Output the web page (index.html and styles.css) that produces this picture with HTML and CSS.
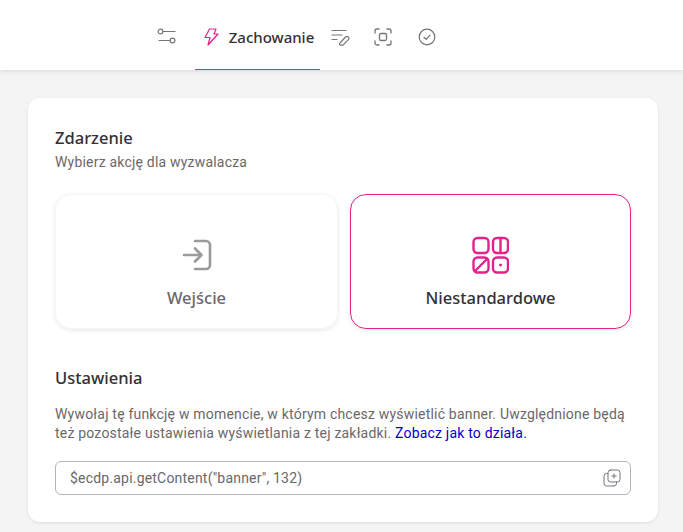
FILE: index.html
```html
<!DOCTYPE html>
<html>
<head>
<meta charset="utf-8">
<title>Zachowanie</title>
<link rel="stylesheet" href="styles.css">
</head>
<body>

<div class="topbar">
    <div class="tab">
        <svg width="20" height="20" viewBox="0 0 20 20" fill="none" stroke="#77737a" stroke-width="1.2" stroke-linecap="round">
            <circle cx="3.500" cy="4.500" r="2.400"/>
            <path d="M6 4.500h12"/>
            <circle cx="15.500" cy="13.500" r="2.400"/>
            <path d="M2 13.500h11"/>
        </svg>
    </div>
    <div class="tab active">
        <svg width="15" height="18" viewBox="0 0 15 18" fill="none" stroke="#e5218b" stroke-width="1.200" stroke-linejoin="round">
            <path d="M5.500 1h6.500l-2 5h4L4 17l2-7.500H1z"/>
        </svg>
        <span>Zachowanie</span>
    </div>
    <div class="tab">
        <svg width="20" height="20" viewBox="0 0 20 20" fill="none" stroke="#77737a" stroke-width="1.200" stroke-linecap="round" stroke-linejoin="round">
            <path d="M2 3.500h14M2 8h10M2 12.500h5"/>
            <path d="M10 16l5.500-6a2 2 0 0 1 3 2.600l-5.500 5.600h-2.200a1.200 1.200 0 0 1-.8-2.200z"/>
        </svg>
    </div>
    <div class="tab">
        <svg width="18" height="18" viewBox="0 0 18 18" fill="none" stroke="#77737a" stroke-width="1.300" stroke-linecap="round">
            <path d="M1 5V3a2 2 0 0 1 2-2h2M13 1h2a2 2 0 0 1 2 2v2M17 13v2a2 2 0 0 1-2 2h-2M5 17H3a2 2 0 0 1-2-2v-2"/>
            <rect x="5.500" y="5.500" width="7" height="7" rx="1.500"/>
        </svg>
    </div>
    <div class="tab">
        <svg width="18" height="18" viewBox="0 0 18 18" fill="none" stroke="#77737a" stroke-width="1.200" stroke-linecap="round" stroke-linejoin="round">
            <circle cx="9" cy="9" r="7.800"/>
            <path d="M6 9.300l2.200 2 3.800-4.200"/>
        </svg>
    </div>
</div>

<div class="content">
    <div class="card">
        <h2>Zdarzenie</h2>
        <p class="sub">Wybierz akcję dla wyzwalacza</p>

        <div class="tiles">
            <div class="tile">
                <svg width="32" height="32" viewBox="0 0 32 32" fill="none" stroke="#9b9a9b" stroke-width="2.600" stroke-linecap="round" stroke-linejoin="round">
                    <path d="M14 2h11a4 4 0 0 1 4 4v20a4 4 0 0 1-4 4H14"/>
                    <path d="M3 16h17M14 9.500l6.500 6.500-6.500 6.500"/>
                </svg>
                <span>Wejście</span>
            </div>
            <div class="tile selected">
                <svg width="37" height="38" viewBox="0 0 37 37" fill="none" stroke="#e5218b" stroke-width="2.400" stroke-linecap="round">
                    <rect x="1.500" y="1.500" width="15" height="15" rx="4"/>
                    <rect x="21" y="1.500" width="15" height="15" rx="4"/>
                    <path d="M28.500 1.500v15"/>
                    <rect x="1.500" y="21" width="15" height="15" rx="4"/>
                    <path d="M3 34.500l12-12"/>
                    <rect x="21" y="21" width="15" height="15" rx="4"/>
                    <circle cx="28.500" cy="28.500" r="1" fill="#e5218b" stroke-width="1"/>
                </svg>
                <span>Niestandardowe</span>
            </div>
        </div>

        <h2 class="second">Ustawienia</h2>
        <p class="desc">Wywołaj tę funkcję w momencie, w którym chcesz wyświetlić banner. Uwzględnione będą też pozostałe ustawienia wyświetlania z tej zakładki. <a href="#">Zobacz jak to działa.</a></p>

        <div class="codebox">
            <span>$ecdp.api.getContent("banner", 132)</span>
            <svg width="18" height="18" viewBox="0 0 18 18" fill="none" stroke="#77737a" stroke-width="1" stroke-linecap="round">
                <rect x="5" y="1" width="12" height="12" rx="2.500"/>
                <path d="M5 4.500H3.500A2.500 2.500 0 0 0 1 7v7.500A2.500 2.500 0 0 0 3.500 17H11a2.500 2.500 0 0 0 2.500-2.500V13"/>
                <path d="M11 4.800v4.400M8.800 7h4.400"/>
            </svg>
        </div>
    </div>
</div>

</body>
</html>
```

FILE: styles.css
```css
html, body {
    margin: 0;
    padding: 0;
    height: 100%;
    overflow: hidden;
    background-color: #f4f4f4;
    font-family: Roboto, "Liberation Sans", sans-serif;
}

.topbar {
    height: 70px;
    box-sizing: border-box;
    padding-left: 149px;
    display: flex;
    background-color: #fff;
    box-shadow: 0 1px 5px rgba(0, 0, 0, 0.12);
}

.tab {
    height: 70px;
    box-sizing: border-box;
    width: 36px;
    margin-right: 8px;
    padding-top: 4px;
    display: flex;
    align-items: center;
    justify-content: center;
}

.tab:first-child {
    margin-right: 10px;
}

.tab:nth-child(3) {
    margin-right: 7px;
}

.tab.active {
    width: 125px;
    margin-right: 2px;
    padding-left: 3px;
    gap: 10px;
    border-bottom: 1px solid #e5218b;
    color: #333036;
    font-family: "Noto Sans", sans-serif;
    font-size: 15px;
    font-weight: 500;
}

.content {
    padding: 28px 25px 0 28px;
}

.card {
    box-sizing: border-box;
    height: 424px;
    padding: 30px 27px 0;
    background-color: #fff;
    border-radius: 12px;
    box-shadow: 0 1px 3px rgba(0, 0, 0, 0.1);
}

h2 {
    margin: 0;
    font-family: "Noto Sans", sans-serif;
    font-size: 16.5px;
    line-height: 20px;
    font-weight: 500;
    color: #333036;
}

.sub {
    margin: 4px 0 0;
    font-size: 14px;
    line-height: 20px;
    letter-spacing: 0.2px;
    color: #6b676c;
}

.tiles {
    display: grid;
    grid-template-columns: 283px 1fr;
    gap: 12px;
    margin-top: 22px;
}

.tile {
    box-sizing: border-box;
    height: 135px;
    padding-top: 41px;
    border: 1px solid #f6f6f6;
    border-radius: 16px;
    display: flex;
    flex-direction: column;
    align-items: center;
    box-shadow: 0 1px 4px rgba(0, 0, 0, 0.1);
    font-family: "Noto Sans", sans-serif;
    font-size: 16.5px;
    font-weight: 500;
    color: #6b676c;
}

.tile svg {
    height: 38px;
}

.tile span {
    margin-top: 14px;
    line-height: 20px;
}

.tile.selected {
    border-color: #e5218b;
    color: #333036;
}

h2.second {
    margin-top: 39px;
}

.desc {
    margin: 17px 0 0;
    font-size: 14px;
    line-height: 19px;
    letter-spacing: 0.2px;
    color: #6b676c;
}

.desc a {
    color: #0000cc;
    text-decoration: none;
}

.codebox {
    box-sizing: border-box;
    height: 34px;
    margin-top: 18px;
    padding: 0 9px 0 14px;
    border: 1px solid #b5b5b5;
    border-radius: 6px;
    display: flex;
    align-items: center;
    justify-content: space-between;
    font-size: 14px;
    letter-spacing: 0.2px;
    color: #6b676c;
}
```
